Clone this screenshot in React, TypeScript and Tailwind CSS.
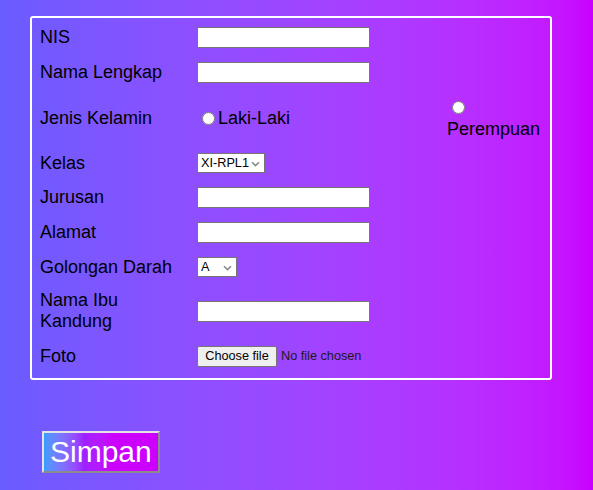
import React from 'react';

const textInput = 'w-[173px] h-[21px] border border-[#767676] bg-white px-[2px] text-[13.333px]';

function Chevron() {
  return (
    <svg
      className="pointer-events-none absolute right-[5px] top-[8px]"
      width="9"
      height="6"
      viewBox="0 0 9 6"
      fill="none"
    >
      <path d="M1 1.2 L4.5 4.6 L8 1.2" stroke="#8a8a8a" strokeWidth="1.6" />
    </svg>
  );
}

function Select({ width, options }: { width: string; options: string[] }) {
  return (
    <div className={`relative h-[20px] ${width}`}>
      <select className="block appearance-none w-full h-full border border-[#767676] bg-white pl-[3px] text-[12.7px] leading-none text-black outline-none">
        {options.map(o => (
          <option key={o}>{o}</option>
        ))}
      </select>
      <Chevron />
    </div>
  );
}

export default function App() {
  return (
    <div className="min-h-[490px] w-full bg-linear-to-r from-[#6a5cff] to-[#c900ff] pt-4 pl-[30px] font-['Liberation_Sans',Arial,sans-serif] text-[18px] leading-[1.15] text-black">
      <form className="w-[522px] h-[364px] border-2 border-white rounded-[3px] pl-2 grid grid-cols-[157px_250px_1fr] grid-rows-[38px_32px_60px_30px_38px_32px_38px_50px_41px] items-center">
        <span>NIS</span>
        <input type="text" className={textInput} />
        <span />

        <span>Nama Lengkap</span>
        <input type="text" className={textInput} />
        <span />

        <span>Jenis Kelamin</span>
        <label className="flex items-center">
          <input type="radio" name="jk" className="ml-[5px] mr-[3px] w-[13px] h-[13px]" />
          <span>Laki-Laki</span>
        </label>
        <label className="self-start mt-[13px] flex flex-col items-start">
          <input type="radio" name="jk" className="ml-[5px] w-[13px] h-[13px]" />
          <span className="mt-[5px]">Perempuan</span>
        </label>

        <span>Kelas</span>
        <Select width="w-[68px]" options={['XI-RPL1', 'XI-RPL2']} />
        <span />

        <span>Jurusan</span>
        <input type="text" className={textInput} />
        <span />

        <span>Alamat</span>
        <input type="text" className={textInput} />
        <span />

        <span>Golongan Darah</span>
        <Select width="w-[40px]" options={['A', 'B', 'AB', 'O']} />
        <span />

        <span>
          Nama Ibu
          <br />
          Kandung
        </span>
        <input type="text" className={textInput} />
        <span />

        <span>Foto</span>
        <label className="flex items-center text-[12.7px] text-[#1a1a1a]">
          <input type="file" className="hidden" />
          <span className="w-[80px] h-[21px] flex items-center justify-center border border-[#767676] rounded-[2px] bg-[#efefef] text-black">
            Choose file
          </span>
          <span className="ml-[4px]">No file chosen</span>
        </label>
        <span />
      </form>

      <div className="mt-[51px] ml-3">
        <button
          type="submit"
          className="h-[42px] px-[6px] text-[30px] leading-none text-white bg-linear-to-r from-[#3a9cff] via-[#a020ff] via-35% to-[#cc00ff] to-60% border-2 border-t-[#e3e3e3] border-l-[#e3e3e3] border-r-[#8c8c8c] border-b-[#8c8c8c]"
        >
          Simpan
        </button>
      </div>
    </div>
  );
}
